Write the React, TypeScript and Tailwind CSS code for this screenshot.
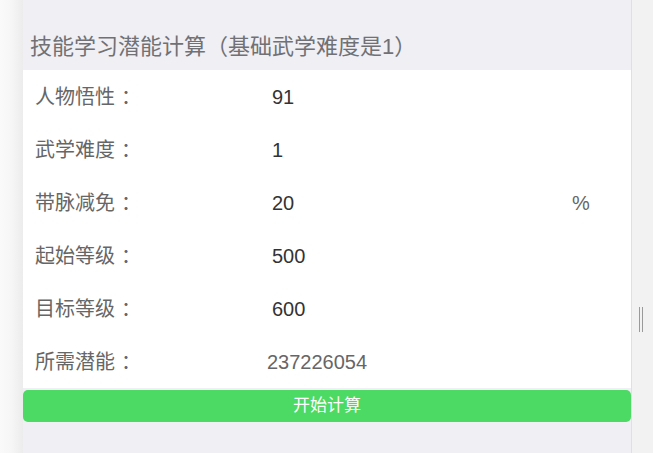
import React from 'react';

const rows = [
  { label: '人物悟性', value: '91' },
  { label: '武学难度', value: '1' },
  { label: '带脉减免', value: '20', unit: '%' },
  { label: '起始等级', value: '500' },
  { label: '目标等级', value: '600' },
];

function Colon() {
  return <span className="ml-[6px]">：</span>;
}

export default function App() {
  return (
    <div
      className="flex h-[453px] w-[653px] overflow-hidden"
      style={{ fontFamily: '"Liberation Sans", "Noto Sans CJK SC", sans-serif' }}
    >
      {/* left gutter */}
      <div className="w-[23px] shrink-0 bg-gradient-to-r from-[#fafafa] via-[#f6f6f6] to-[#ececec]" />

      {/* main column */}
      <div className="flex w-[608px] shrink-0 flex-col bg-[#efeff4]">
        <div className="h-[70px] pl-[7px] pt-[32px] text-[22px] leading-[30px] text-[#717175]">
          技能学习潜能计算（基础武学难度是1）
        </div>

        <div className="bg-white">
          {rows.map((row) => (
            <div key={row.label} className="flex h-[53px] items-center">
              <div className="w-[249px] pl-[12px] text-[20px] text-[#666]">
                {row.label}
                <Colon />
              </div>
              <div className="w-[300px] text-[20px] text-[#333]">{row.value}</div>
              {row.unit && <div className="text-[20px] text-[#666]">{row.unit}</div>}
            </div>
          ))}
          <div className="flex h-[53px] items-center">
            <div className="w-[244px] pl-[12px] text-[20px] text-[#666]">
              所需潜能
              <Colon />
            </div>
            <div className="text-[20px] text-[#666]">237226054</div>
          </div>
        </div>

        <button className="mt-[2px] flex h-[32px] w-full items-center justify-center rounded-[5px] bg-[#4cd964] text-[17px] text-white">
          开始计算
        </button>
      </div>

      {/* right gutter with resize handle */}
      <div className="flex flex-1 flex-col border-l border-[#e0e0e0] bg-[#f2f2f2] pl-[7px] pt-[307px]">
        <div className="flex gap-[2px]">
          <div className="h-[25px] w-px bg-[#9a9a9a]" />
          <div className="h-[25px] w-px bg-[#9a9a9a]" />
        </div>
      </div>
    </div>
  );
}
